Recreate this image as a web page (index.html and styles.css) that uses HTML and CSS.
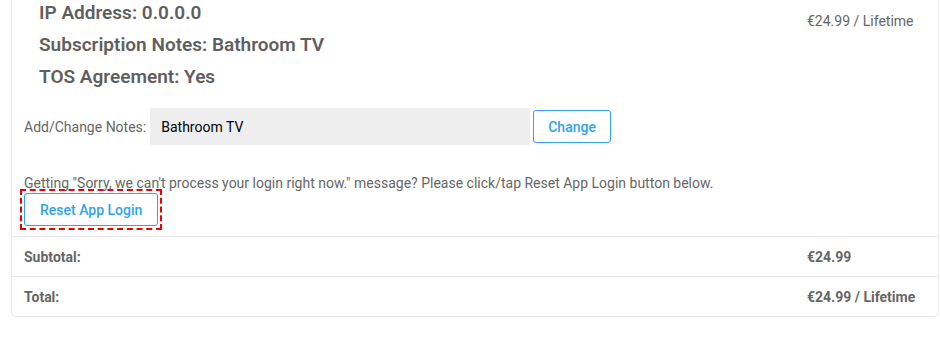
FILE: index.html
```html
<!DOCTYPE html>
<html lang="en">
<head>
    <meta charset="UTF-8">
    <meta name="viewport" content="width=device-width, initial-scale=1.0">
    <title>Order Details</title>
    <link rel="stylesheet" href="styles.css">
</head>
<body>
    <!-- Order Table -->
    <div class="order-card">
        <table class="order-table">
            <tbody>
                <tr class="item-row">
                    <td class="item-cell">
                        <div class="item-meta">
                            <div class="meta-line">IP Address: 0.0.0.0</div>
                            <div class="meta-line">Subscription Notes: Bathroom TV</div>
                            <div class="meta-line">TOS Agreement: Yes</div>
                        </div>

                        <form class="notes-form">
                            <label for="notes">Add/Change Notes:</label>
                            <input type="text" id="notes" name="notes" value="Bathroom TV">
                            <button type="button" class="outline-button">Change</button>
                        </form>

                        <p class="login-message">Getting "Sorry, we can't process your login right now." message? Please click/tap Reset App Login button below.</p>
                        <span class="highlight-box">
                            <button type="button" class="outline-button">Reset App Login</button>
                        </span>
                    </td>
                    <td class="price-cell">€24.99 / Lifetime</td>
                </tr>
                <tr class="total-row">
                    <th>Subtotal:</th>
                    <td>€24.99</td>
                </tr>
                <tr class="total-row">
                    <th>Total:</th>
                    <td>€24.99 / Lifetime</td>
                </tr>
            </tbody>
        </table>
    </div>
</body>
</html>
```

FILE: styles.css
```css
/* Global Styles */
body {
    font-family: Roboto, 'Liberation Sans', sans-serif;
    margin: 0;
    padding: 0;
    background: #fff;
    color: #666;
    font-size: 14px;
}

/* Order Card */
.order-card {
    margin: -14px 1px 0 11px;
    border: 1px solid #e8e8e8;
    border-radius: 5px;
    overflow: hidden;
}

.order-table {
    width: 100%;
    border-collapse: collapse;
}

.order-table td,
.order-table th {
    padding: 0 12px;
    vertical-align: top;
    text-align: left;
}

.order-table tr + tr td,
.order-table tr + tr th {
    border-top: 1px solid #e8e8e8;
}

/* Item Row */
.item-cell {
    width: 759px;
    padding-bottom: 6px !important;
}

.item-meta {
    padding: 10px 0 0 15px;
    margin-bottom: 15px;
}

.meta-line {
    font-size: 19px;
    font-weight: 600;
    line-height: 32px;
    color: #5f5f5f;
}

.price-cell {
    font-size: 14px;
    color: #666;
    padding-top: 26px !important;
    line-height: 16px;
}

/* Notes Form */
.notes-form {
    display: flex;
    align-items: center;
    margin: 0;
}

.notes-form label {
    color: #666;
    margin-right: 4px;
}

.notes-form input {
    width: 380px;
    height: 37px;
    box-sizing: border-box;
    border: none;
    background: #eee;
    padding: 0 11px;
    font-family: inherit;
    font-size: 14px;
    color: #000;
    margin-right: 3px;
}

.outline-button {
    background: #fff;
    border: 1px solid #2ea3f2;
    border-radius: 3px;
    color: #2ea3f2;
    font-family: inherit;
    font-size: 14px;
    font-weight: 500;
    height: 33px;
    padding: 0 14px;
    cursor: pointer;
}

.login-message {
    margin: 28px 0 0 0;
    line-height: 20px;
}

.highlight-box {
    display: inline-block;
    margin: -4px 0 0 -4px;
    padding: 2px;
    border: 2px dashed #e00;
    vertical-align: top;
}

.highlight-box .outline-button {
    display: block;
    padding: 0 15px;
}

/* Totals */
.total-row th,
.total-row td {
    font-size: 14px;
    font-weight: 700;
    color: #666;
    height: 39px;
    vertical-align: middle;
}
```
